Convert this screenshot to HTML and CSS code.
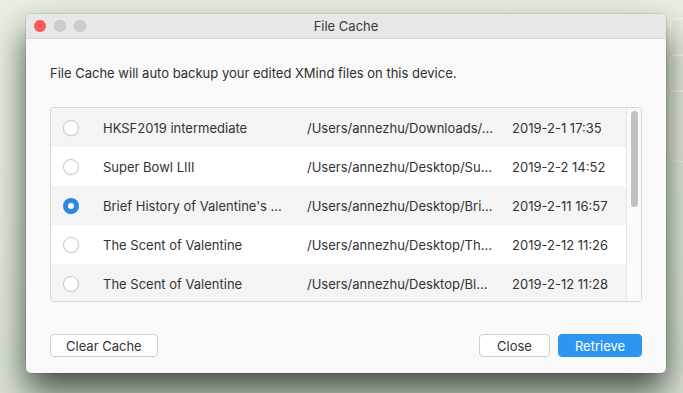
FILE: index.html
```html
<!DOCTYPE html>
<html lang="en">
<head>
    <meta charset="UTF-8">
    <title>File Cache</title>
    <link rel="stylesheet" href="styles.css">
</head>
<body>
    <div class="desktop">
        <div class="map-shape shape-a"></div>
        <div class="map-shape shape-b"></div>
        <div class="map-shape shape-c"></div>

        <div class="window">
            <div class="titlebar">
                <div class="lights">
                    <span class="light red"></span>
                    <span class="light"></span>
                    <span class="light"></span>
                </div>
                <div class="title">File Cache</div>
            </div>

            <div class="content">
                <p class="intro">File Cache will auto backup your edited XMind files on this device.</p>

                <div class="file-table">
                    <div class="rows">
                        <div class="row">
                            <span class="radio"></span>
                            <span class="cell name">HKSF2019 intermediate</span>
                            <span class="cell path">/Users/annezhu/Downloads/...</span>
                            <span class="cell date">2019-2-1 17:35</span>
                        </div>
                        <div class="row">
                            <span class="radio"></span>
                            <span class="cell name">Super Bowl LIII</span>
                            <span class="cell path">/Users/annezhu/Desktop/Su...</span>
                            <span class="cell date">2019-2-2 14:52</span>
                        </div>
                        <div class="row">
                            <span class="radio checked"></span>
                            <span class="cell name">Brief History of Valentine's ...</span>
                            <span class="cell path">/Users/annezhu/Desktop/Bri...</span>
                            <span class="cell date">2019-2-11 16:57</span>
                        </div>
                        <div class="row">
                            <span class="radio"></span>
                            <span class="cell name">The Scent of Valentine</span>
                            <span class="cell path">/Users/annezhu/Desktop/Th...</span>
                            <span class="cell date">2019-2-12 11:26</span>
                        </div>
                        <div class="row">
                            <span class="radio"></span>
                            <span class="cell name">The Scent of Valentine</span>
                            <span class="cell path">/Users/annezhu/Desktop/Bl...</span>
                            <span class="cell date">2019-2-12 11:28</span>
                        </div>
                    </div>
                    <div class="scroll-track">
                        <div class="scroll-thumb"></div>
                    </div>
                </div>

                <div class="actions">
                    <button class="btn">Clear Cache</button>
                    <div class="spacer"></div>
                    <button class="btn btn-close">Close</button>
                    <button class="btn btn-primary">Retrieve</button>
                </div>
            </div>
        </div>
    </div>
</body>
</html>
```

FILE: styles.css
```css
body {
    margin: 0;
    font-family: 'Inter', 'Liberation Sans', sans-serif;
    color: #333;
}

.desktop {
    position: relative;
    width: 683px;
    height: 393px;
    overflow: hidden;
    background: linear-gradient(180deg, #e8efe4 0%, #e3ebdf 60%, #d9e2d5 100%);
    padding: 14px 0 0 26px;
    box-sizing: border-box;
}

/* faint mind-map shapes behind the dialog */
.map-shape {
    position: absolute;
    border: 1px solid rgba(255, 255, 255, 0.7);
    border-radius: 6px;
}

.shape-a { left: 670px; top: 18px; width: 40px; height: 36px; }
.shape-b { left: 670px; top: 54px; width: 40px; height: 36px; }
.shape-c { left: 670px; top: 90px; width: 40px; height: 70px; }

/* Dialog window */
.window {
    position: relative;
    width: 640px;
    height: 359px;
    background-color: #f9f9f9;
    border-radius: 5px;
    box-shadow: 0 0 0 1px rgba(0, 0, 0, 0.08), 0 18px 34px rgba(30, 40, 30, 0.8);
    overflow: hidden;
    display: flex;
    flex-direction: column;
}

.titlebar {
    height: 24px;
    background-color: #e7e7e7;
    border-bottom: 1px solid #d6d6d6;
    display: flex;
    align-items: center;
    position: relative;
}

.lights {
    display: flex;
    gap: 8px;
    padding-left: 8px;
}

.light {
    width: 12px;
    height: 12px;
    border-radius: 50%;
    background-color: #cdcdcd;
    box-shadow: inset 0 0 0 0.5px rgba(0, 0, 0, 0.08);
}

.light.red {
    background-color: #fe5b57;
}

.title {
    position: absolute;
    left: 0;
    right: 0;
    text-align: center;
    font-size: 13px;
    color: #3a3a3a;
}

.content {
    padding: 0 24px 0 24px;
    flex: 1;
    display: flex;
    flex-direction: column;
}

.intro {
    margin: 26px 0 0 0;
    font-size: 13px;
    line-height: 16px;
    color: #2f2f2f;
}

/* File list */
.file-table {
    margin-top: 26px;
    height: 193px;
    border: 1px solid #d8d8d8;
    border-radius: 3px;
    background-color: #ffffff;
    display: flex;
    overflow: hidden;
}

.rows {
    flex: 1;
}

.row {
    height: 39px;
    display: flex;
    align-items: center;
    font-size: 13px;
    color: #333;
    white-space: nowrap;
}

.row:nth-child(odd) {
    background-color: #f4f4f4;
}

.radio {
    width: 16px;
    height: 16px;
    border-radius: 50%;
    border: 1px solid #c9c9c9;
    background-color: #fff;
    box-shadow: 0 0.5px 1px rgba(0, 0, 0, 0.08);
    margin-left: 12px;
    margin-right: 24px;
    box-sizing: border-box;
    flex-shrink: 0;
}

.radio.checked {
    border: none;
    background-color: #2c88e4;
    position: relative;
}

.radio.checked::after {
    content: '';
    position: absolute;
    left: 5px;
    top: 5px;
    width: 6px;
    height: 6px;
    border-radius: 50%;
    background-color: #fff;
}

.cell {
    overflow: hidden;
}

.name { width: 204px; }
.path { width: 205px; }
.date { flex: 1; }

.scroll-track {
    width: 14px;
    border-left: 1px solid #e6e6e6;
    background-color: #fafafa;
    display: flex;
    justify-content: center;
    padding-top: 3px;
}

.scroll-thumb {
    width: 7px;
    height: 96px;
    border-radius: 4px;
    background-color: #c1c1c1;
}

/* Buttons */
.actions {
    display: flex;
    align-items: center;
    margin-top: 32px;
}

.spacer {
    flex: 1;
}

.btn {
    font-family: inherit;
    font-size: 13px;
    height: 23px;
    padding: 0 15px;
    border: 1px solid #cfcfcf;
    border-radius: 4px;
    background-color: #ffffff;
    color: #333;
}

.btn-close {
    width: 71px;
    margin-right: 8px;
}

.btn-primary {
    width: 84px;
    border-color: #2a92ee;
    background-color: #2e96f0;
    color: #fff;
}
```
